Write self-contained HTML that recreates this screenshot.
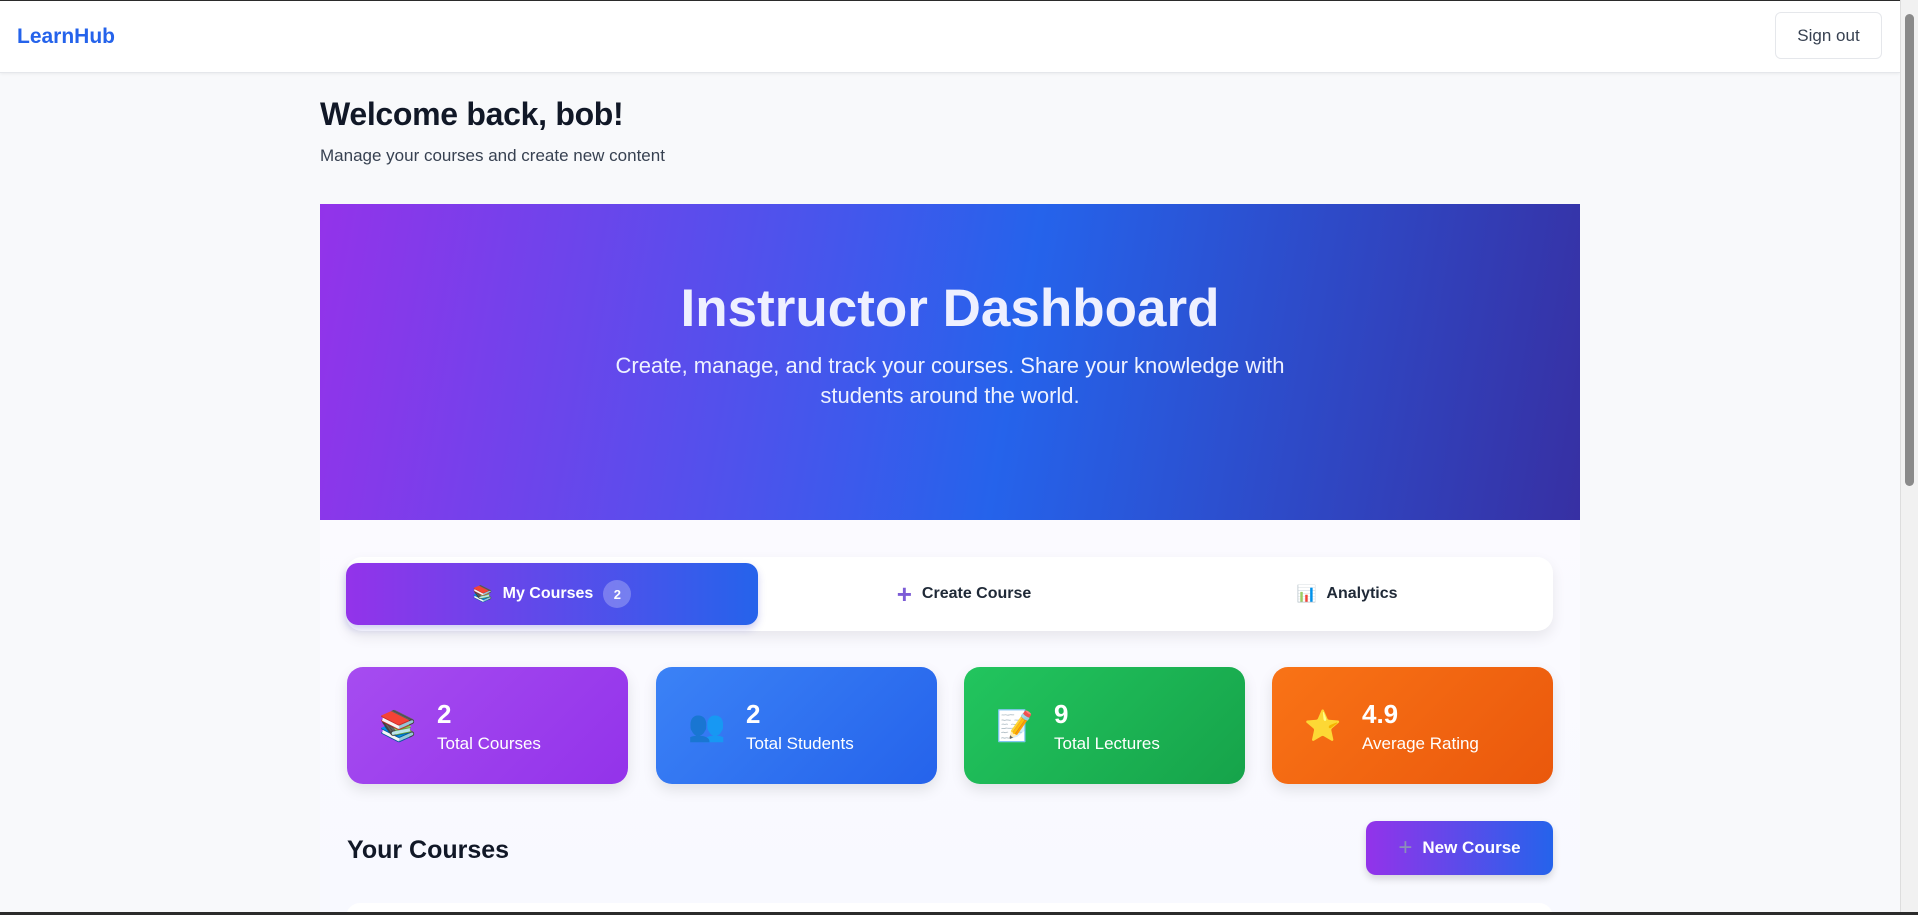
<!DOCTYPE html>
<html><head><meta charset="utf-8"><style>
*{box-sizing:border-box;margin:0;padding:0}
body{width:1918px;height:915px;overflow:hidden;background:#2b2b2b;font-family:"Liberation Sans",sans-serif;position:relative}
.page{position:absolute;left:0;top:1px;width:1900px;height:911px;background:#f8f9fb;overflow:hidden}
.nav{height:72px;background:#fff;border-bottom:1px solid #e5e7eb;box-shadow:0 1px 3px rgba(0,0,0,.06);position:relative}
.logo{position:absolute;left:17px;top:24px;font-size:21px;font-weight:bold;color:#2563eb}
.signout{position:absolute;left:1775px;top:11px;width:107px;height:47px;border:1px solid #e5e7eb;border-radius:6px;background:#fff;font-size:17px;color:#374151;display:flex;align-items:center;justify-content:center}
h1{position:absolute;left:320px;top:95px;font-size:32px;color:#111827;letter-spacing:-0.3px}
.sub{position:absolute;left:320px;top:145px;font-size:17px;color:#374151}
.hero{position:absolute;left:320px;top:203px;width:1260px;height:316px;background:linear-gradient(100deg,#9333ea 0%,#4f52ec 35%,#2563eb 55%,#3730a3 100%);text-align:center;color:#fff}
.hero h2{font-size:53px;margin-top:74px;color:#eef0ff}
.hero p{font-size:22px;width:700px;margin:12px auto 0;line-height:30px;color:#eef2ff}
.main{position:absolute;left:320px;top:519px;width:1260px;height:400px;background:linear-gradient(#fbfaff,#f8f9ff)}
.tabs{position:absolute;left:26px;top:37px;width:1207px;height:74px;background:#fff;border-radius:16px;box-shadow:0 6px 14px rgba(0,0,0,.08)}
.tab{position:absolute;top:6px;height:62px;width:412px;display:flex;align-items:center;justify-content:center;font-size:16px;font-weight:bold;color:#1f2937;gap:10px}
.tab.active{left:0;background:linear-gradient(90deg,#9333ea,#2563eb);color:#fff;border-radius:12px;box-shadow:0 4px 8px rgba(60,60,200,.25)}
.badge{width:28px;height:28px;border-radius:50%;background:rgba(255,255,255,.25);display:inline-flex;align-items:center;justify-content:center;font-size:13px}
.card{position:absolute;top:147px;width:281px;height:117px;border-radius:16px;color:#fff;box-shadow:0 6px 14px rgba(0,0,0,.1)}
.card .ic{position:absolute;left:32px;top:42px;font-size:30px}
.card .n{position:absolute;left:90px;top:32px;font-size:26px;font-weight:bold}
.card .l{position:absolute;left:90px;top:67px;font-size:17px}
h3{position:absolute;left:27px;top:316px;font-size:25px;color:#111827}
.newbtn{position:absolute;left:1046px;top:301px;width:187px;height:54px;border-radius:10px;background:linear-gradient(90deg,#9333ea,#2563eb);color:#fff;font-size:17px;font-weight:bold;display:flex;align-items:center;justify-content:center;gap:10px;box-shadow:0 4px 8px rgba(0,0,0,.15)}
.bottomcard{position:absolute;left:26px;top:383px;width:1207px;height:30px;background:#fff;border-radius:14px}
.sb{position:absolute;left:1900px;top:0;width:18px;height:915px;background:#f1f1f1;border-left:1px solid #ddd}
.thumb{position:absolute;left:1905px;top:14px;width:9px;height:472px;background:#8a8a8a;border-radius:5px}
</style></head><body>
<div class="page">
<div class="nav"><div class="logo">LearnHub</div><div class="signout">Sign out</div></div>
<h1>Welcome back, bob!</h1>
<div class="sub">Manage your courses and create new content</div>
<div class="hero"><h2>Instructor Dashboard</h2><p>Create, manage, and track your courses. Share your knowledge with students around the world.</p></div>
<div class="main">
<div class="tabs">
<div class="tab active"><span>📚</span>My Courses<span class="badge">2</span></div>
<div class="tab" style="left:412px"><span style="color:#7c5cd6;font-size:26px;font-weight:bold">+</span>Create Course</div>
<div class="tab" style="left:795px"><span>📊</span>Analytics</div>
</div>
<div class="card" style="left:27px;background:linear-gradient(135deg,#a64cf0,#9333ea)"><div class="ic">📚</div><div class="n">2</div><div class="l">Total Courses</div></div>
<div class="card" style="left:336px;background:linear-gradient(135deg,#3b82f6,#2563eb)"><div class="ic">👥</div><div class="n">2</div><div class="l">Total Students</div></div>
<div class="card" style="left:644px;background:linear-gradient(135deg,#22c55e,#16a34a)"><div class="ic">📝</div><div class="n">9</div><div class="l">Total Lectures</div></div>
<div class="card" style="left:952px;background:linear-gradient(135deg,#f97316,#ea580c)"><div class="ic">⭐</div><div class="n">4.9</div><div class="l">Average Rating</div></div>
<h3>Your Courses</h3>
<div class="newbtn"><span style="color:#8b8fb8;font-size:24px;font-weight:normal">+</span>New Course</div>
<div class="bottomcard"></div>
</div>
</div>
<div class="sb"></div><div class="thumb"></div>
<div style="position:absolute;left:0;top:912px;width:1918px;height:3px;background:#2b2b2b"></div>
</body></html>
